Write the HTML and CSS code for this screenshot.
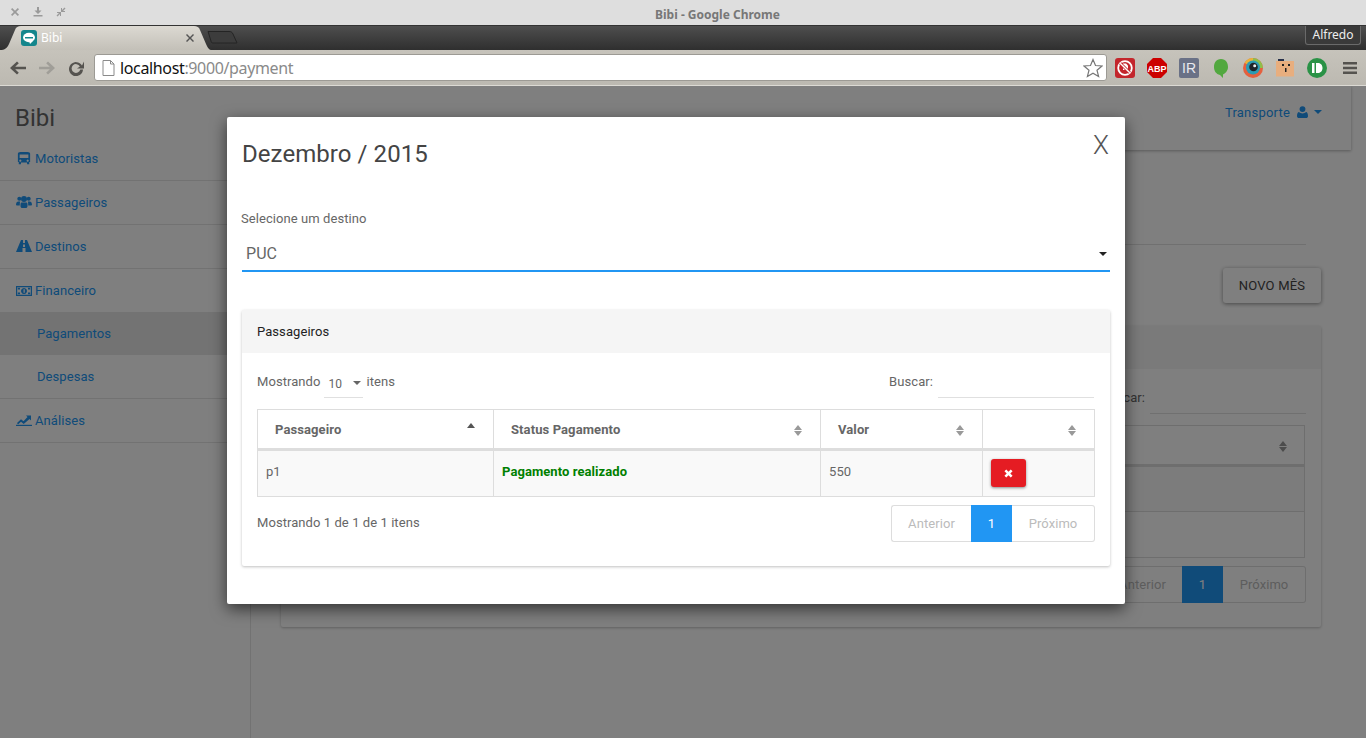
FILE: index.html
```html
<!DOCTYPE html>
<html lang="pt">
<head>
<meta charset="utf-8">
<title>Bibi - Google Chrome</title>
<link rel="stylesheet" href="styles.css">
</head>
<body>
<div class="titlebar">
  <div class="winbtns">
    <svg class="winicon" viewBox="0 0 10 10"><path d="M1 2.200 2.200 1 5 3.800 7.800 1 9 2.200 6.200 5 9 7.800 7.800 9 5 6.200 2.200 9 1 7.800 3.800 5z"/></svg>
    <svg class="winicon" viewBox="0 0 10 10"><path d="M4 0h2v3.500h2.500L5 7 1.500 3.500H4zM0.500 8h9v1.600h-9z"/></svg>
    <svg class="winicon" viewBox="0 0 10 10"><path d="M0.500 8.500 3 6H1V5h4v4H4V7L1.500 9.500zM9.500 1.500 7 4h2v1H5V1h1v2L8.500 .5z"/></svg>
  </div>
  <div class="wintitle">Bibi - Google Chrome</div>
</div>
<div class="tabstrip">
  <div class="tab">
    <svg class="tabshape" viewBox="0 0 212 24"><defs><linearGradient id="tabg" x1="0" y1="0" x2="0" y2="1"><stop offset="0" stop-color="#dcd9d2"/><stop offset="1" stop-color="#c3c0b8"/></linearGradient></defs><path d="M0 24C5 24 7 22 9 18L15 4C16 1 18 0 21 0H194C197 0 199 1 200 4L206 18C208 22 209 24 212 24Z" fill="url(#tabg)"/></svg>
    <svg class="favicon" viewBox="0 0 16 16"><rect width="16" height="16" rx="3" fill="#14868c"/><ellipse cx="8" cy="7.500" rx="6" ry="4.700" fill="#fff"/><path d="M4 7h8v1.500H4z" fill="#14868c"/><path d="M8 11h4l-3 3z" fill="#fff"/></svg>
    <span class="tabtitle">Bibi</span>
    <svg class="tabclose" viewBox="0 0 10 10"><path d="M1 2 2 1 5 4 8 1 9 2 6 5 9 8 8 9 5 6 2 9 1 8 4 5z"/></svg>
  </div>
  <svg class="newtab" viewBox="0 0 31 14"><path d="M1 1.500H22C24 1.500 25 2 26 4L30 13H6C5 13 4 12.500 4 11Z" fill="#3c3c3c" stroke="#242424"/></svg>
  <div class="user">Alfredo</div>
</div>
<div class="toolbar">
  <svg class="navicon" viewBox="0 0 18 16"><path d="M8 1.500 9.800 3.300 6.200 6.700H17V9.300H6.200L9.800 12.700 8 14.500 1 8Z" fill="#55534f"/></svg>
  <svg class="navicon" viewBox="0 0 18 16"><path d="M10 1.500 8.200 3.300 11.800 6.700H1V9.300H11.800L8.200 12.700 10 14.500 17 8Z" fill="#a09e98"/></svg>
  <svg class="navicon" viewBox="0 0 18 16"><path d="M15 5.500A7 7 0 1 0 16 9.500H13.300A4.400 4.400 0 1 1 12.900 6.400L10 8.500H17V1.500Z" fill="#55534f"/></svg>
  <div class="omnibox">
    <svg class="pageicon" viewBox="0 0 13 16"><path d="M1 .5H8.500L12 4V15.500H1Z" fill="#fff" stroke="#8a8a8a"/><path d="M8.500 .5V4H12" fill="none" stroke="#8a8a8a"/></svg>
    <span class="url"><span class="host">localhost</span>:9000/payment</span>
    <svg class="star" viewBox="0 0 20 20"><path d="M10 1.500 12.500 7.500 19 8 14 12.200 15.600 18.600 10 15.200 4.400 18.600 6 12.200 1 8 7.500 7.500Z" fill="#fff" stroke="#777" stroke-width="1.200"/></svg>
  </div>
  <div class="extensions">
    <svg class="ext" viewBox="0 0 20 20"><rect width="20" height="20" rx="3" fill="#c3262c"/><circle cx="10" cy="10" r="6.800" fill="none" stroke="#fff" stroke-width="1.800"/><path d="M8 5.500h3l2 2v4.500H8z" fill="#fff"/><path d="M5.200 5.200 14.800 14.800" stroke="#c3262c" stroke-width="3"/><path d="M5.200 5.200 14.800 14.800" stroke="#fff" stroke-width="1.400"/></svg>
    <svg class="ext" viewBox="0 0 20 20"><path d="M6 0H14L20 6V14L14 20H6L0 14V6Z" fill="#c00"/><text x="10" y="13.500" class="abp">ABP</text></svg>
    <svg class="ext" viewBox="0 0 20 20"><rect width="20" height="20" rx="2" fill="#6a7186"/><text x="10" y="15" class="irtext">IR</text></svg>
    <svg class="ext" viewBox="0 0 20 20"><path d="M10 1C15 1 17 5 17 9 17 13 14 15.500 12 16.500V20L9 17C5 16 3 13 3 9 3 5 5 1 10 1Z" fill="#52a83f"/></svg>
    <svg class="ext" viewBox="0 0 20 20"><circle cx="10" cy="10" r="10" fill="#e5603e"/><path d="M10 0A10 10 0 0 1 20 10L10 10Z" fill="#8fbf4a"/><path d="M1.500 4.700A10 10 0 0 1 10 0L10 10Z" fill="#eab23a"/><circle cx="10" cy="9.500" r="7" fill="#2c9bb3"/><circle cx="10.500" cy="9" r="4.300" fill="#1f2328"/><circle cx="11.700" cy="7.800" r="1.500" fill="#eee"/></svg>
    <svg class="ext" viewBox="0 0 20 20"><rect x="1" y="3" width="18" height="15.500" fill="#e8ae7e"/><rect x="3" y="1" width="6" height="2" fill="#26304a"/><rect x="7" y="6" width="2" height="2" fill="#222"/><rect x="13" y="6" width="2" height="2" fill="#222"/><rect x="10" y="10" width="1.500" height="4" fill="#222"/></svg>
    <svg class="ext" viewBox="0 0 20 20"><circle cx="10" cy="10" r="10" fill="#2a9246"/><path d="M5 5H7.500V15H5ZM9 5H11C14 5 15.500 7.500 15.500 10 15.500 12.500 14 15 11 15H9Z" fill="#fff"/></svg>
  </div>
  <svg class="menu" viewBox="0 0 14 14"><path d="M0 1H14V3.500H0ZM0 5.700H14V8.200H0ZM0 10.400H14V12.900H0Z" fill="#55534f"/></svg>
</div>
<div class="toolbar-edge"></div>

<div class="page">
  <aside class="sidebar">
    <div class="brand">Bibi</div>
    <nav class="nav">
      <a class="navitem">
        <svg class="navglyph" viewBox="0 0 16 16"><path d="M4 1H12C14 1 15 2 15 3V12.500H14V15H11.500V13H4.500V15H2V12.500H1V3C1 2 2 1 4 1ZM3 4V8H13V4ZM3.800 9.800A1.200 1.200 0 1 0 3.801 9.800ZM12.200 9.800A1.200 1.200 0 1 0 12.201 9.800Z" fill-rule="evenodd"/></svg>Motoristas</a>
      <a class="navitem">
        <svg class="navglyph wide" viewBox="0 0 16 14"><circle cx="3.300" cy="3.800" r="2"/><circle cx="12.700" cy="3.800" r="2"/><circle cx="8" cy="4" r="3"/><path d="M0 10C0 7.500 1 6.500 2.300 6.500H4.200C3.800 7.500 3.800 8.500 3.800 10.500H1C.3 10.500 0 10.300 0 10ZM16 10C16 7.500 15 6.500 13.700 6.500H11.800C12.200 7.500 12.200 8.500 12.200 10.500H15C15.700 10.500 16 10.300 16 10ZM5.500 7.500H10.500C11.500 7.500 11.500 9 11.500 11 11.500 12.500 10.500 13 10 13H6C5.500 13 4.500 12.500 4.500 11 4.500 9 4.500 7.500 5.500 7.500Z"/></svg>Passageiros</a>
      <a class="navitem">
        <svg class="navglyph wide" viewBox="0 0 16 12"><path d="M5 0H7V3H9V0H11L16 12H9.500V8H6.500V12H0ZM7 4.500V7H9V4.500Z" fill-rule="evenodd"/></svg>Destinos</a>
      <a class="navitem fin">
        <svg class="navglyph wide" viewBox="0 0 16 12"><path d="M0 1H16V11H0ZM1.200 2.200V9.800H14.800V2.200ZM8 3A3 3 0 1 1 7.999 3ZM7.500 4.300V7.700H8.800V4.300Z" fill-rule="evenodd"/><path d="M1.800 2.800H4V4.500H1.800ZM12 2.800H14.200V4.500H12ZM1.800 7.500H4V9.200H1.800ZM12 7.500H14.200V9.200H12Z"/></svg>Financeiro</a>
      <a class="navitem sub active">Pagamentos</a>
      <a class="navitem sub last">Despesas</a>
      <a class="navitem">
        <svg class="navglyph wide" viewBox="0 0 16 12"><path d="M0 10.800H16V12H0Z"/><path d="M1 9 5 5.200 7.500 7.300 11.500 3 10 1.500H15V6.500L13.500 5 7.700 10 5 7.800 2 10.500Z"/></svg>Análises</a>
    </nav>
  </aside>
  <main class="main">
    <header class="topbar">
      <a class="account">Transporte
        <svg class="usericon" viewBox="0 0 12 13"><circle cx="6" cy="3.300" r="3.200"/><path d="M2 6.500C3 7.500 4.500 8 6 8 7.500 8 9 7.500 10 6.500 11.500 7 12 9 12 11 12 12.300 11 13 10 13H2C1 13 0 12.300 0 11 0 9 .5 7 2 6.500Z"/></svg>
        <i class="caret"></i></a>
    </header>
    <div class="content">
      <div class="pagehead"></div>
      <div class="actions"><button class="rawbtn">NOVO MÊS</button></div>
      <section class="card outer">
        <div class="cardhead"></div>
        <div class="cardbody">
          <div class="controls">
            <div class="ctrl"></div>
            <label class="ctrl">Buscar:<span class="searchbox"></span></label>
          </div>
          <table class="grid">
            <thead><tr><th class="bgcol1"></th><th class="bgcol2"><i class="sort"></i></th></tr></thead>
            <tbody><tr class="odd"><td></td><td></td></tr><tr><td></td><td></td></tr></tbody>
          </table>
          <div class="foot end">
            <div class="pager">
              <span class="pg first">Anterior</span><span class="pg on">1</span><span class="pg last">Próximo</span>
            </div>
          </div>
        </div>
      </section>
    </div>
  </main>

  <div class="backdrop"></div>

  <div class="modal">
    <div class="modalhead">
      <h1 class="modaltitle">Dezembro / 2015</h1>
      <span class="closex">X</span>
    </div>
    <div class="field">
      <div class="fieldlabel">Selecione um destino</div>
      <div class="destselect"><span>PUC</span><i class="caret dark"></i></div>
    </div>
    <section class="card inner">
      <div class="cardhead lite">Passageiros</div>
      <div class="cardbody">
        <div class="controls">
          <div class="ctrl">Mostrando <span class="lenselect">10 <i class="caret small"></i></span> itens</div>
          <label class="ctrl">Buscar:<span class="searchbox"></span></label>
        </div>
        <table class="grid">
          <thead>
            <tr>
              <th class="c1">Passageiro<i class="sort asc"></i></th>
              <th class="c2">Status Pagamento<i class="sort"></i></th>
              <th class="c3">Valor<i class="sort"></i></th>
              <th class="c4"><i class="sort"></i></th>
            </tr>
          </thead>
          <tbody>
            <tr class="odd">
              <td>p1</td>
              <td class="paid">Pagamento realizado</td>
              <td>550</td>
              <td class="btncell"><button class="delbtn"><svg class="delicon" viewBox="0 0 10 10"><path d="M0.500 2.500 2.500 .5 5 3 7.500 .5 9.500 2.500 7 5 9.500 7.500 7.500 9.500 5 7 2.500 9.500 .5 7.500 3 5z"/></svg></button></td>
            </tr>
          </tbody>
        </table>
        <div class="foot">
          <div class="info">Mostrando 1 de 1 de 1 itens</div>
          <div class="pager">
            <span class="pg first">Anterior</span><span class="pg on">1</span><span class="pg last">Próximo</span>
          </div>
        </div>
      </div>
    </section>
  </div>
</div>
</body>
</html>
```
FILE: styles.css
```css
* { box-sizing: border-box; }
html, body { margin: 0; padding: 0; height: 100%; overflow: hidden; }
body { font-family: Roboto, "Liberation Sans", sans-serif; font-size: 13px; letter-spacing: .07px; color: #666; background: #fff; width: 1366px; height: 738px; }

/* window chrome */
.titlebar { height: 25px; background: #dedede; display: flex; align-items: center; position: relative; letter-spacing: 0; }
.winbtns { display: flex; gap: 13px; padding-left: 10px; padding-bottom: 2px; }
.winicon { width: 10px; height: 10px; fill: #9a9a9a; }
.wintitle { position: absolute; left: 0; width: 1366px; padding-left: 69px; text-align: center; font: bold 12px "Noto Sans", sans-serif; color: #777; top: 6px; }
.tabstrip { height: 25px; background: linear-gradient(#4e4e4e, #2f2f2f); display: flex; align-items: flex-end; position: relative; border-top: 1px solid #333; letter-spacing: 0; }
.tab { width: 212px; height: 24px; position: relative; display: flex; align-items: center; padding: 0 0 1px 21px; flex: none; }
.tabshape { position: absolute; left: 0; top: 0; width: 212px; height: 24px; }
.favicon { width: 16px; height: 16px; position: relative; flex: none; }
.tabtitle { position: relative; font: 12px "Noto Sans", sans-serif; color: #fff; margin-left: 4px; flex: 1; }
.tabclose { position: relative; width: 10px; height: 10px; fill: #555; margin-right: 17px; }
.newtab { width: 31px; height: 14px; margin: 0 0 6px -5px; flex: none; }
.user { position: absolute; right: 5px; top: 0; width: 56px; height: 19px; border: 1px solid #6a6a6a; border-top: 0; border-radius: 0 0 3px 3px; font: 12px "Noto Sans", sans-serif; color: #eee; text-align: center; line-height: 18px; background: #3a3a3a; }
.toolbar { height: 35px; background: linear-gradient(#c6c3bb, #bcb9b1); display: flex; align-items: center; padding-left: 9px; letter-spacing: 0; }
.toolbar-edge { height: 1px; background: #dcdad4; }
.navicon { width: 18px; height: 16px; margin-right: 11px; flex: none; }
.omnibox { width: 1013px; height: 27px; margin-left: -2px; background: #fff; border: 1px solid #9c9a94; border-radius: 3px; display: flex; align-items: center; padding-left: 7px; flex: none; }
.pageicon { width: 13px; height: 16px; flex: none; }
.url { font: 16px "Noto Sans", sans-serif; color: #8a8a8a; margin-left: 5px; flex: 1; letter-spacing: -.36px; }
.host { color: #111; }
.star { width: 20px; height: 20px; margin-right: 3px; flex: none; }
.extensions { display: flex; gap: 12px; margin-left: 8px; flex: none; }
.ext { width: 20px; height: 20px; }
.abp { font: bold 9px "Liberation Sans", sans-serif; fill: #fff; text-anchor: middle; }
.irtext { font: 14px "Liberation Sans", sans-serif; fill: #e8e8ee; text-anchor: middle; }
.menu { width: 14px; height: 14px; margin-left: 16px; flex: none; }

/* page */
.page { height: 652px; position: relative; display: flex; overflow: hidden; background: #fff; }
.sidebar { width: 251px; border-right: 1px solid #e4e4e4; flex: none; }
.brand { font-size: 24px; line-height: 32px; height: 51px; padding: 16px 15px 0; color: #666; letter-spacing: 0; }
.nav { display: flex; flex-direction: column; }
.navitem { height: 44px; padding-left: 16px; padding-bottom: 1px; border-bottom: 1px solid #e4e4e4; display: flex; align-items: center; color: #2196f3; font-size: 13px; }
.navitem.fin { height: 43px; border-bottom: 0; padding-bottom: 0; }
.navitem.sub { padding-left: 37px; height: 43px; }
.navitem.sub.last { height: 44px; }
.navitem.sub.active { background: #e6e6e6; border-bottom: 0; }
.navglyph { width: 14px; height: 14px; margin: 0 4px 0 1px; fill: currentColor; flex: none; }
.navglyph.wide { width: 16px; margin: 0 3px 0 0; }
.main { flex: 1; display: flex; flex-direction: column; min-width: 0; }
.topbar { height: 64px; margin: 0 15px 0 -1px; background: #fff; box-shadow: 0 1px 3px rgba(0,0,0,.3); clip-path: inset(0 -6px -6px 0); display: flex; align-items: flex-start; justify-content: flex-end; padding: 18px 29px 0 0; }
.account { color: #2196f3; display: flex; align-items: center; height: 16px; font-size: 13px; letter-spacing: .2px; }
.usericon { width: 11px; height: 12px; fill: currentColor; margin: 0 6px 0 7px; }
.caret { display: inline-block; width: 0; height: 0; border-left: 4px solid transparent; border-right: 4px solid transparent; border-top: 4px solid currentColor; }
.content { flex: 1; padding: 0 45px 0 30px; }
.pagehead { margin: 0 15px 0 0; height: 95px; border-bottom: 1px solid #e0e0e0; }
.actions { display: flex; justify-content: flex-end; margin-top: 23px; }
.rawbtn { width: 98px; height: 35px; border: 0; border-radius: 3px; background: #fff; color: #444; font: 400 13px Roboto, sans-serif; letter-spacing: .2px; box-shadow: 0 1px 4px rgba(0,0,0,.45); padding: 0; }
.card { background: #fff; border-radius: 2px; box-shadow: 0 1px 3px rgba(0,0,0,.25); }
.outer { margin-top: 23px; height: 301px; }
.cardhead { height: 43px; background: #f5f5f5; padding: 0 15px; display: flex; align-items: center; color: #222; }
.cardbody { padding: 12px 15px 0; }
.controls { display: flex; justify-content: space-between; height: 44px; color: #666; }
.inner .controls { padding-right: 1px; }
.ctrl { display: flex; align-items: flex-start; line-height: 15px; padding-top: 9px; }
.lenselect { width: 39px; height: 24px; margin: 0 4px 0 3px; padding-left: 5px; border-bottom: 1px solid #e0e0e0; font-size: 12px; line-height: 20px; display: flex; align-items: flex-start; }
.caret.small { margin: 7px 0 0 11px; }
.searchbox { width: 156px; height: 24px; margin-left: 5px; border-bottom: 1px solid #e0e0e0; display: block; }

.grid { width: calc(100% - 1px); border-collapse: collapse; table-layout: fixed; color: #666; }
.grid th { height: 40px; border: 1px solid #ddd; border-bottom: 3px solid #ddd; text-align: left; font-weight: 700; font-size: 13px; padding: 0 17px; position: relative; letter-spacing: .1px; }
.grid td { height: 46px; border: 1px solid #ddd; padding: 0 8px 4px; font-size: 13px; vertical-align: middle; }
.inner .grid td { height: 47px; }
.grid tr.odd td { background: #f9f9f9; }
.c1 { width: 236px; }
.c2 { width: 327px; }
.c3 { width: 162px; }
.c4 { width: 112px; }
.bgcol2 { width: 300px; }
.sort { position: absolute; right: 17px; top: 15px; width: 9px; height: 11px; }
.outer .sort { right: 16px; }
.sort::before, .sort::after { content: ""; position: absolute; left: 0; width: 0; height: 0; border-left: 4.500px solid transparent; border-right: 4.500px solid transparent; }
.sort::before { top: 0; border-bottom: 5px solid #999; }
.sort::after { bottom: 0; border-top: 5px solid #999; }
.sort.asc { right: 17px; top: 13px; }
.sort.asc::before { border-bottom-color: #555; }
.sort.asc::after { display: none; }
.paid { color: #008000; font-weight: 700; }
.grid td.btncell { padding: 0 8px; vertical-align: top; }
.delbtn { width: 35px; height: 28px; margin-top: 8px; border: 0; padding: 0; border-radius: 3px; background: #e51c23; box-shadow: 0 1px 3px rgba(0,0,0,.45); display: flex; align-items: center; justify-content: center; }
.delicon { width: 9px; height: 9px; fill: #fff; }
.foot { display: flex; justify-content: space-between; margin-top: 8px; }
.foot.end { justify-content: flex-end; }
.info { line-height: 35px; color: #666; }
.pager { display: flex; height: 37px; color: #bbb; font-size: 13px; line-height: 35px; }
.pg { display: block; text-align: center; border: 1px solid #ddd; border-left: 0; border-right: 0; }
.pg.first { width: 80px; border-left: 1px solid #ddd; border-radius: 3px 0 0 3px; }
.pg.last { width: 83px; border-right: 1px solid #ddd; border-radius: 0 3px 3px 0; }
.pg.on { width: 41px; background: #2196f3; border-color: #2196f3; color: #fff; }
.backdrop { position: absolute; left: 0; top: 0; right: 0; bottom: 0; background: rgba(0,0,0,.5); }
.modal { position: absolute; left: 227px; top: 31px; width: 898px; height: 487px; background: #fff; border-radius: 2px; box-shadow: 0 5px 16px rgba(0,0,0,.6); padding: 0 15px; }
.modalhead { display: flex; justify-content: space-between; height: 87px; }
.modaltitle { margin: 21px 0 0; font-size: 24px; font-weight: 400; line-height: 32px; color: #444; letter-spacing: .07px; }
.closex { font-size: 26px; font-weight: 300; line-height: 30px; margin: 13px 1px 0 0; color: #555; }
.field { height: 106px; }
.fieldlabel { line-height: 29px; color: #666; margin-left: -1px; }
.destselect { height: 39px; padding: 4px 4px 0; border-bottom: 2px solid #2196f3; display: flex; justify-content: space-between; align-items: center; font-size: 16px; color: #666; }
.caret.dark { color: #222; margin-right: -1px; }
.inner { height: 256px; }
.cardhead.lite { background: #f5f5f5; color: #222; }
```
